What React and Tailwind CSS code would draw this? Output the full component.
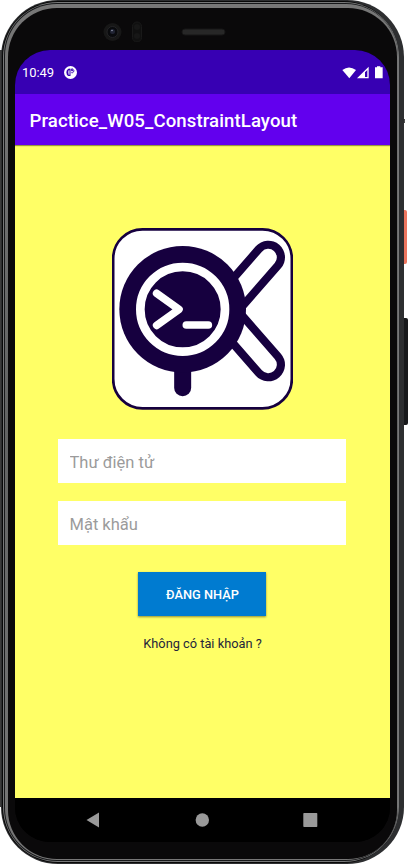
function StatusBar() {
  return (
    <div className="flex h-[44px] shrink-0 items-center justify-between bg-[#3700b3] pt-px pr-[6px] pl-[7px]">
      <div className="flex items-center gap-[10px]">
        <span className="w-[32px] pt-px text-[13px] leading-[16px] tracking-[-0.1px] text-white">10:49</span>
        <svg width="13" height="13" viewBox="0 0 39 39">
          <circle cx="19.500" cy="19.500" r="19.500" fill="#fff" />
          <path d="M18 8H13Q7 12 7 19Q7 27 13 30H18V26H14Q11 20 14 13H18Z" fill="#3700b3" />
          <path d="M18 8V30M22 9H27V14H22ZM22 20H26Q30 18 30 13" fill="none" stroke="#3700b3" strokeWidth="3" />
        </svg>
      </div>
      <svg width="42" height="14" viewBox="0 0 126 42" fill="#fff">
        <path d="M1 12Q21-3 42 12L22 37Z" />
        <path fillRule="evenodd" d="M45 37L80 2V37ZM69 19V33H76V12Z" />
        <path d="M99 4h6V1h10v3h7v33H99Z" />
      </svg>
    </div>
  );
}

function Logo() {
  return (
    <svg width="181" height="182" viewBox="36 24 543 546" className="shrink-0">
      <rect x="39.500" y="28" width="536" height="537" rx="88" fill="#fff" stroke="#16003f" strokeWidth="8" />
      <g strokeLinecap="round" fill="none">
        <path d="M505 112L374 262M505 434L374 284" stroke="#16003f" strokeWidth="100" />
        <path d="M505 112L374 262M505 434L374 284" stroke="#fff" strokeWidth="51" />
        <path d="M248 430V503" stroke="#16003f" strokeWidth="51" />
        <circle cx="248" cy="268" r="190" fill="#16003f" />
        <circle cx="248" cy="268" r="127" stroke="#fff" strokeWidth="26" />
        <path d="M170 220L237 268L170 316M259 315H325" stroke="#fff" strokeWidth="23" strokeLinejoin="round" />
      </g>
    </svg>
  );
}

function Field({ label, type }) {
  return (
    <input
      type={type}
      placeholder={label}
      className="block h-[44px] w-[288px] shrink-0 bg-white pt-[2px] pr-3 pl-[11.500px] text-[16.500px] outline-none placeholder:text-[#9b9b9b]"
    />
  );
}

function NavigationBar() {
  return (
    <div className="flex h-[44px] shrink-0 items-center bg-black pl-[71px]">
      <svg width="232" height="16" viewBox="0 0 232 16" fill="#999">
        <path d="M0.500 8L13 0.500V15.500Z" />
        <circle cx="116.300" cy="8" r="6.700" />
        <rect x="217.300" y="1" width="14" height="14" rx="0.700" />
      </svg>
    </div>
  );
}

export default function App() {
  return (
    <div className="relative h-[865px] w-[408px] overflow-hidden bg-white font-['Roboto','Noto_Sans',sans-serif]">
      <div className="absolute top-[50px] left-0 h-[757px] w-[4px] bg-[#3b3b3b]" />
      <div className="absolute top-[210px] left-[403px] h-[54px] w-[4px] rounded-r-[2px] bg-[#ed765f]" />
      <div className="absolute top-[318px] left-[403px] h-[107px] w-[5px] rounded-r-[2px] bg-[#18191b]" />
      <div className="absolute top-[119px] left-[403px] h-[4px] w-[2px] bg-[#555]" />
      <div className="relative ml-px flex h-[864px] w-[403px] flex-col rounded-[57px] bg-[#2d2e30] pt-[1px] pr-[5px] pb-[1px] pl-[1px]">
        <div className="flex flex-1 flex-col rounded-[56px] bg-[#080808] pt-px pb-px pl-px">
          <div className="flex flex-1 flex-col rounded-[55px] bg-[#777879] pt-px pr-[1px] pb-px pl-px">
            <div className="flex flex-1 flex-col rounded-[53px] bg-[#17181a] pt-px pb-px pl-px">
              <div className="flex flex-1 flex-col rounded-[52px] bg-linear-to-b from-[#777] via-[#626363] to-[#777] pt-[4px] pr-px pb-px pl-[3px]">
                <div className="flex flex-1 flex-col rounded-[49px] bg-[#0a090a] pl-[7px]">
                  <div className="flex h-[42px] shrink-0 items-center pt-px pl-[88px]">
                    <svg width="124" height="24" viewBox="0 0 124 24">
                      <circle cx="9.500" cy="14" r="9" fill="#171717" />
                      <circle cx="9.500" cy="14" r="5.500" fill="#090a0d" stroke="#242426" />
                      <circle cx="9.500" cy="13.500" r="2.500" fill="#202333" />
                      <circle cx="9" cy="12.500" r="0.800" fill="#9099ae" />
                      <rect x="29.500" y="4" width="9" height="20" rx="4.500" fill="#101010" stroke="#191919" />
                      <circle cx="34" cy="9" r="3" fill="#171717" />
                      <circle cx="34" cy="18" r="3" fill="#171717" />
                      <rect x="79" y="11" width="43" height="6" rx="3" fill="#272727" stroke="#171717" />
                    </svg>
                  </div>
                  <main className="flex h-[792px] w-[375px] shrink-0 flex-col overflow-hidden rounded-t-[35px] rounded-b-[35px] bg-black">
                    <StatusBar />
                    <header className="z-10 flex h-[51px] shrink-0 items-center bg-[#6200ee] pt-[3px] pl-[14.500px] shadow-[0_1px_1px_rgba(0,0,0,.4)]">
                      <h1 className="text-[18.600px] leading-[24px] font-medium tracking-[0.100px] whitespace-nowrap text-white">Practice_W05_ConstraintLayout</h1>
                    </header>
                    <section className="flex h-[653px] shrink-0 flex-col items-center bg-[#ffff66] pt-[83px]">
                      <Logo />
                      <form className="mt-[29px] mr-px flex flex-col items-center" onSubmit={(event) => event.preventDefault()}>
                        <div className="flex flex-col gap-[18px]">
                          <Field label="Thư điện tử" type="text" />
                          <Field label="Mật khẩu" type="password" />
                        </div>
                        <button className="mt-[27px] h-[44px] w-[128px] bg-[#007bd0] pt-px pl-px text-[12.800px] font-medium text-white shadow-[0_1px_2px_rgba(0,0,0,.45)]">ĐĂNG NHẬP</button>
                      </form>
                      <p className="mt-[19px] text-[12.800px] leading-[18px] whitespace-nowrap text-[#25253a]">Không có tài khoản ?</p>
                    </section>
                    <NavigationBar />
                  </main>
                </div>
              </div>
            </div>
          </div>
        </div>
      </div>
    </div>
  );
}
